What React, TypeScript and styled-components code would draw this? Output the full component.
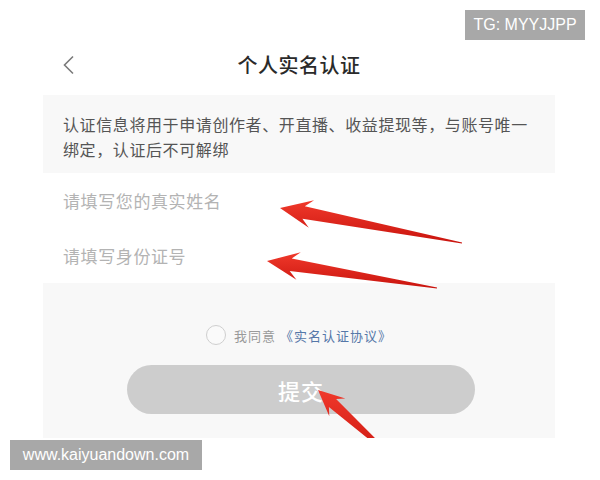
import styled, { createGlobalStyle } from "styled-components";

const GlobalStyle = createGlobalStyle`
  html, body {
    margin: 0;
    padding: 0;
    background: #ffffff;
  }
  * { box-sizing: border-box; }
`;

const Page = styled.div`
  position: relative;
  width: 600px;
  height: 480px;
  overflow: hidden;
  background: #ffffff;
  font-family: "Noto Sans CJK SC", "Noto Sans", sans-serif;
`;

// the phone screenshot itself
const Screen = styled.div`
  width: 512px;
  margin-left: 43px;
  display: flex;
  flex-direction: column;
`;

const Header = styled.div`
  height: 95px;
  padding-top: 40px;
  display: grid;
  grid-template-columns: 60px 1fr 60px;
  align-items: start;
`;

const Back = styled.div`
  padding-left: 19px;
  height: 50px;
  display: flex;
  align-items: center;
`;

const Title = styled.h1`
  margin: 0;
  height: 50px;
  line-height: 50px;
  text-align: center;
  font-size: 20px;
  font-weight: 500;
  color: #2a2a2a;
  letter-spacing: 0.5px;
`;

const Notice = styled.div`
  height: 78px;
  padding: 17px 20px 0 20px;
  background: #f8f8f8;
  color: #555555;
  font-size: 16px;
  line-height: 25px;
  letter-spacing: 0.6px;
`;

const Line = styled.div`
  white-space: nowrap;
`;

const Fields = styled.div`
  background: #ffffff;
  display: flex;
  flex-direction: column;
  height: 110px;
`;

const Field = styled.input`
  height: 55px;
  border: none;
  outline: none;
  background: transparent;
  padding: 0 20px;
  font-family: inherit;
  font-size: 17px;
  letter-spacing: 0.6px;
  color: #333;
  &::placeholder {
    color: #b3b3b3;
  }
`;

const Bottom = styled.div`
  height: 155px;
  background: #f8f8f8;
  padding-top: 42px;
  display: flex;
  flex-direction: column;
  align-items: center;
  gap: 20px;
`;

const Agree = styled.label`
  height: 20px;
  display: flex;
  align-items: center;
  gap: 8px;
  font-size: 13px;
  letter-spacing: 1px;
  color: #9a9a9a;
`;

const Radio = styled.span`
  width: 20px;
  height: 20px;
  border-radius: 50%;
  border: 1.5px solid #cfcfcf;
  background: #fafafa;
`;

const Link = styled.span`
  color: #5577a8;
  margin-left: -4px;
`;

const Submit = styled.button`
  width: 348px;
  height: 49px;
  margin-left: 4px;
  border: none;
  border-radius: 25px;
  background: #cdcdcd;
  color: #ffffff;
  font-family: inherit;
  font-size: 22px;
  font-weight: 500;
  letter-spacing: 1px;
`;

const Badge = styled.div<{ left: number; top: number; w: number }>`
  position: absolute;
  left: ${(p) => p.left}px;
  top: ${(p) => p.top}px;
  width: ${(p) => p.w}px;
  height: 30px;
  background: #a8a8a8;
  color: #ffffff;
  font-family: "Liberation Sans", Arial, sans-serif;
  font-size: 16px;
  display: flex;
  align-items: center;
  justify-content: center;
`;

const Overlay = styled.svg`
  position: absolute;
  left: 0;
  top: 0;
  pointer-events: none;
`;

// builds a long tapering arrow from its tip to its tail
const arrowPoints = (tx: number, ty: number, ex: number, ey: number, head: number, wing: number) => {
  const len = Math.hypot(ex - tx, ey - ty);
  const dx = (ex - tx) / len;
  const dy = (ey - ty) / len;
  const nx = -dy;
  const ny = dx;
  const bx = tx + dx * head;
  const by = ty + dy * head;
  const kx = tx + dx * (head * 0.75);
  const ky = ty + dy * (head * 0.75);
  const s = wing * 0.45;
  const pts = [
    [tx, ty],
    [bx + nx * wing, by + ny * wing],
    [kx + nx * s, ky + ny * s],
    [ex + nx * 0.6, ey + ny * 0.6],
    [ex - nx * 0.6, ey - ny * 0.6],
    [kx - nx * s, ky - ny * s],
    [bx - nx * wing, by - ny * wing],
  ];
  return pts.map((p) => p.map((v) => v.toFixed(1)).join(",")).join(" ");
};

const arrows = [
  { t: [280, 208], e: [462, 243], head: 32, wing: 14 },
  { t: [267, 261], e: [437, 288], head: 32, wing: 14 },
  { t: [318, 390], e: [398, 462], head: 26, wing: 12 },
];

const App = () => {
  return (
    <Page>
      <GlobalStyle />
      <Screen>
        <Header>
          <Back>
            <svg width="13" height="20" viewBox="0 0 13 20">
              <path d="M11 1.5 L2.5 10 L11 18.5" fill="none" stroke="#7a7a7a" strokeWidth="1.6" />
            </svg>
          </Back>
          <Title>个人实名认证</Title>
          <div />
        </Header>
        <Notice>
          <Line>认证信息将用于申请创作者、开直播、收益提现等，与账号唯一</Line>
          <Line>绑定，认证后不可解绑</Line>
        </Notice>
        <Fields>
          <Field placeholder="请填写您的真实姓名" />
          <Field placeholder="请填写身份证号" />
        </Fields>
        <Bottom>
          <Agree>
            <Radio />
            我同意<Link>《实名认证协议》</Link>
          </Agree>
          <Submit>提交</Submit>
        </Bottom>
      </Screen>

      <Overlay width="600" height="480" viewBox="0 0 600 480">
        <defs>
          <clipPath id="shot">
            <rect x="0" y="0" width="600" height="438" />
          </clipPath>
          <linearGradient id="red" x1="0" y1="0" x2="0" y2="1">
            <stop offset="0" stopColor="#f0392b" />
            <stop offset="1" stopColor="#c9140e" />
          </linearGradient>
        </defs>
        <g clipPath="url(#shot)">
          {arrows.map((a, i) => (
            <polygon key={i} points={arrowPoints(a.t[0], a.t[1], a.e[0], a.e[1], a.head, a.wing)} fill="url(#red)" />
          ))}
        </g>
      </Overlay>

      <Badge left={465} top={10} w={120}>TG: MYYJJPP</Badge>
      <Badge left={10} top={440} w={192}>www.kaiyuandown.com</Badge>
    </Page>
  );
};

export default App;
